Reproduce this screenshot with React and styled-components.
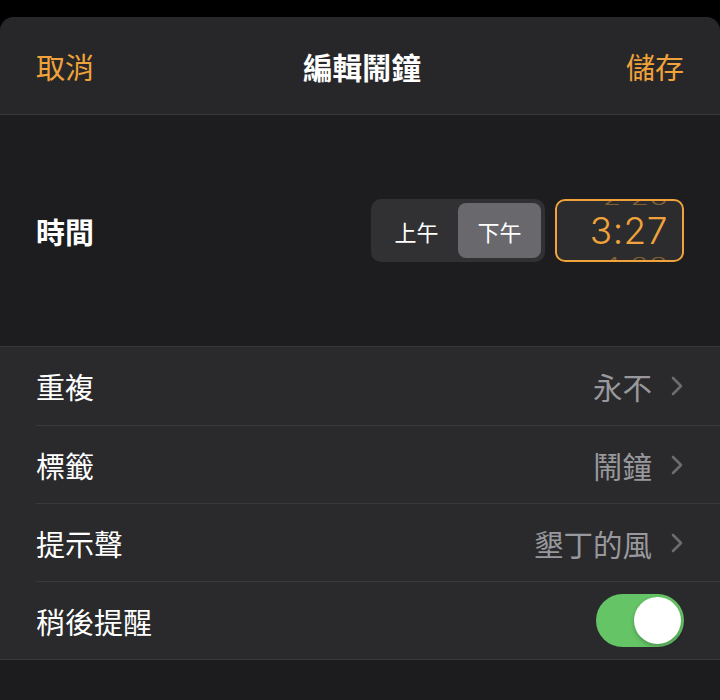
import React from 'react'
import styled, { createGlobalStyle } from 'styled-components'

const Global = createGlobalStyle`
    body {
        margin: 0;
        background: #000;
        font-family: "Noto Sans CJK TC", "Noto Sans", sans-serif;
    }
`

const Screen = styled.div`
    width: 720px;
    height: 700px;
    padding-top: 17px;
    box-sizing: border-box;
    background: #000;
    overflow: hidden;
`

const Sheet = styled.div`
    height: 100%;
    background: #1c1c1e;
    border-radius: 14px 14px 0 0;
    overflow: hidden;
`

const Header = styled.header`
    height: 97px;
    display: flex;
    align-items: center;
    justify-content: space-between;
    padding: 0 36px;
    background: #272729;
    border-bottom: 1px solid #38383a;
`

const NavButton = styled.span`
    color: #f0a33a;
    font-size: 29px;
`

const Title = styled.h1`
    margin: 0 0 0 4px;
    color: #fff;
    font-size: 29.5px;
    font-weight: 700;
`

const TimeSection = styled.section`
    height: 231px;
    display: flex;
    align-items: center;
    padding: 0 36px;
    background: #1d1d1f;
    border-bottom: 1px solid #363638;
`

const Label = styled.span`
    flex: 1;
    color: #fff;
    font-size: 29px;
    font-weight: ${p => (p.bold ? 700 : 400)};
`

const Segmented = styled.div`
    display: flex;
    width: 174px;
    height: 63px;
    padding: 4px;
    box-sizing: border-box;
    border-radius: 10px;
    background: #313134;
    margin-right: 10px;
`

const Segment = styled.div`
    flex: 1;
    display: flex;
    align-items: center;
    justify-content: center;
    border-radius: 8px;
    color: #fff;
    font-size: 22px;
    background: ${p => (p.active ? '#68686d' : 'transparent')};
`

const TimeBox = styled.div`
    width: 129px;
    height: 63px;
    box-sizing: border-box;
    border: 2px solid #f0a33a;
    border-radius: 10px;
    background: #2c2c2e;
    overflow: hidden;
    display: flex;
    flex-direction: column;
    align-items: flex-end;
    justify-content: center;
    padding-right: 14px;
`

const Wheel = styled.span`
    color: ${p => (p.faded ? 'rgba(240, 163, 58, 0.45)' : '#f0a33a')};
    font-family: "Inter", "Noto Sans", sans-serif;
    font-weight: 300;
    font-size: ${p => (p.faded ? '30px' : '37px')};
    line-height: ${p => (p.faded ? '22px' : '44px')};
    letter-spacing: 0.5px;
    transform: ${p => (p.faded ? 'scaleY(0.6)' : 'none')};
`

const List = styled.div`
    background: #2a2a2c;
    border-bottom: 1px solid #3a3a3c;
`

const Row = styled.div`
    height: 78px;
    display: flex;
    align-items: center;
    margin-left: 36px;
    padding-right: 36px;
    border-top: ${p => (p.first ? 'none' : '1px solid #3a3a3c')};
    box-sizing: border-box;
`

const Value = styled.span`
    color: #98989d;
    font-size: 29.5px;
    margin-right: 18px;
`

const Chevron = () => (
    <svg width="14" height="22" viewBox="0 0 14 22">
        <path d="M3 3l8 8-8 8" fill="none" stroke="#6b6b70" strokeWidth="2.6" strokeLinecap="round" strokeLinejoin="round" />
    </svg>
)

const Toggle = styled.div`
    width: 88px;
    height: 53px;
    border-radius: 27px;
    background: #65c466;
    display: flex;
    align-items: center;
    justify-content: flex-end;
    padding: 3px;
    box-sizing: border-box;
`

const Knob = styled.div`
    width: 47px;
    height: 47px;
    border-radius: 50%;
    background: #fff;
    box-shadow: 0 2px 4px rgba(0, 0, 0, 0.25);
`

const rows = [
    { label: '重複', value: '永不' },
    { label: '標籤', value: '鬧鐘' },
    { label: '提示聲', value: '墾丁的風' },
]

export default function App() {
    return (
        <Screen>
            <Global />
            <Sheet>
                <Header>
                    <NavButton>取消</NavButton>
                    <Title>編輯鬧鐘</Title>
                    <NavButton>儲存</NavButton>
                </Header>
                <TimeSection>
                    <Label bold>時間</Label>
                    <Segmented>
                        <Segment>上午</Segment>
                        <Segment active>下午</Segment>
                    </Segmented>
                    <TimeBox>
                        <Wheel faded>2 26</Wheel>
                        <Wheel>3:27</Wheel>
                        <Wheel faded>4 28</Wheel>
                    </TimeBox>
                </TimeSection>
                <List>
                    {rows.map((r, key) =>
                        <Row key={key} first={key === 0}>
                            <Label>{r.label}</Label>
                            <Value>{r.value}</Value>
                            <Chevron />
                        </Row>)}
                    <Row>
                        <Label>稍後提醒</Label>
                        <Toggle><Knob /></Toggle>
                    </Row>
                </List>
            </Sheet>
        </Screen>
    )
}
